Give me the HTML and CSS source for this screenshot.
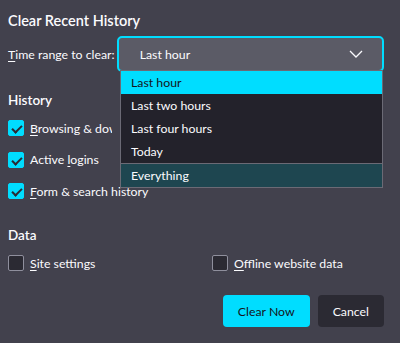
FILE: index.html
```html
<html>
	<head>
		<link rel="stylesheet" href="styles.css">
	</head>
	<body>
		<div class="dialog">
			<h1>Clear Recent History</h1>
			<div class="range">
				<label><u>T</u>ime range to clear:</label>
				<div class="select">
					<span>Last hour</span>
					<svg width="14" height="8" viewBox="0 0 14 8"><path d="M1 1l6 6 6-6" fill="none" stroke="#fbfbfe" stroke-width="1.3"/></svg>
				</div>
				<ul class="menu">
					<li class="sel">Last hour</li>
					<li>Last two hours</li>
					<li>Last four hours</li>
					<li>Today</li>
					<li class="hover">Everything</li>
				</ul>
			</div>
			<h2>History</h2>
			<div class="checks">
				<div class="check"><span class="box on"></span><span class="cut"><u>B</u>rowsing &amp; download history</span></div>
				<div class="check"><span class="box on"></span><span>Active <u>l</u>ogins</span></div>
				<div class="check"><span class="box on"></span><span><u>F</u>orm &amp; search history</span></div>
			</div>
			<h2>Data</h2>
			<div class="grid">
				<div class="check"><span class="box"></span><span><u>S</u>ite settings</span></div>
				<div class="check"><span class="box"></span><span><u>O</u>ffline website data</span></div>
			</div>
			<div class="buttons">
				<button class="primary">Clear Now</button>
				<button>Cancel</button>
			</div>
		</div>
	</body>
</html>
```

FILE: styles.css
```css
body {
	margin: 0;
	background-color: #42414d;
	color: #fbfbfe;
	font-family: Lato, sans-serif;
	font-size: 12.3px;
	width: 400px;
	height: 343px;
	overflow: hidden;
}
u { text-decoration-thickness: 1px; text-underline-offset: 2px; }
.dialog { padding: 12px 16px 0 8px; }
h1 {
	font-size: 14.5px;
	font-weight: 600;
	margin: 0 0 7px;
}
h2 {
	font-size: 13.5px;
	font-weight: 600;
	margin: 0;
}
.range {
	position: relative;
	display: flex;
	align-items: center;
	gap: 2px;
	height: 36px;
	margin-bottom: 20px;
}
.select {
	flex: 1;
	height: 32px;
	border: 2px solid #00ddff;
	border-radius: 5px;
	background: #5b5b66;
	display: flex;
	align-items: center;
	justify-content: space-between;
	padding: 0 19px 0 21px;
}
.menu {
	position: absolute;
	left: 112px;
	top: 34px;
	width: 261px;
	margin: 0;
	padding: 0;
	list-style: none;
	background: #23222b;
	border: 1px solid #6b6a75;
	z-index: 2;
}
.menu li {
	height: 23px;
	line-height: 23px;
	padding-left: 10px;
}
.menu .sel { background: #00ddff; color: #15141a; }
.menu .hover { background: #1e4650; border-top: 1px solid #6b6a75; }
.checks { display: flex; flex-direction: column; gap: 15.5px; margin: 12px 0 28px; }
.check { display: flex; align-items: center; gap: 6px; height: 16px; }
.cut { width: 82px; overflow: hidden; white-space: nowrap; }
.box {
	width: 14px;
	height: 14px;
	border: 1px solid #8f8f9d;
	border-radius: 2px;
	background: #2b2a33;
	flex: none;
}
.box.on {
	border-color: #00ddff;
	background: #00ddff;
	position: relative;
}
.box.on:after {
	content: "";
	position: absolute;
	left: 3px;
	top: 1px;
	width: 8px;
	height: 4px;
	border-left: 2px solid #2b2a33;
	border-bottom: 2px solid #2b2a33;
	transform: translate(0, 3px) rotate(-45deg);
}
.grid { display: grid; grid-template-columns: 204px 1fr; margin-top: 12px; }
.buttons { display: flex; justify-content: flex-end; gap: 8px; margin-top: 24px; }
button {
	font: inherit;
	height: 32px;
	border: none;
	border-radius: 4px;
	background: #2b2a33;
	color: #fbfbfe;
	padding: 0 15px;
}
button.primary { background: #00ddff; color: #15141a; }
```
